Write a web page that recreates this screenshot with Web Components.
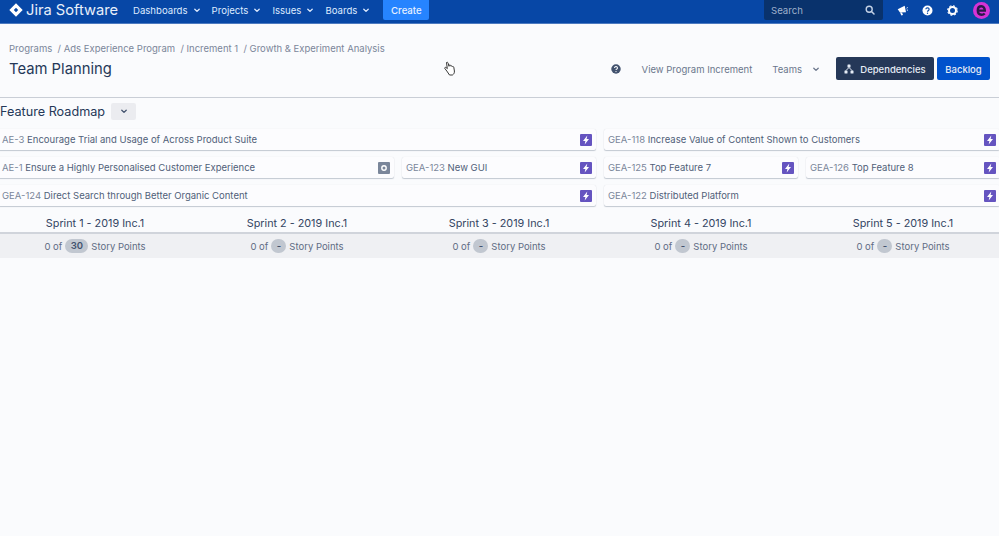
<!DOCTYPE html>
<html>
<head>
<meta charset="utf-8">
<title>Team Planning</title>
<style>
    html, body { margin: 0; height: 100%; overflow: hidden; }
    body {
        background: #fafbfd;
        color: #253858;
        font-family: Inter, "Liberation Sans", sans-serif;
    }
</style>
</head>
<body>
<top-nav></top-nav>
<page-header></page-header>
<feature-roadmap></feature-roadmap>
<sprint-board></sprint-board>
<hand-cursor></hand-cursor>

<script>
const chevron = `<svg width="6" height="5" viewBox="0 0 6 5"><path d="M.8 1.200 3 3.400 5.200 1.200" fill="none" stroke="currentColor" stroke-width="1.300" stroke-linecap="round" stroke-linejoin="round"/></svg>`;

class NavItem extends HTMLElement {
    constructor() {
        super();
        this.attachShadow({ mode: "open" });
        this.shadowRoot.innerHTML = `
            <style>
                :host {
                    display: flex;
                    align-items: center;
                    gap: 6px;
                    color: #deebff;
                    font-size: 9.600px;
                    white-space: nowrap;
                }
            </style>
            <slot></slot>${chevron}
        `;
    }
}

class TopNav extends HTMLElement {
    constructor() {
        super();
        this.attachShadow({ mode: "open" });
        this.shadowRoot.innerHTML = `
            <style>
                :host {
                    display: flex;
                    align-items: flex-start;
                    height: 24px;
                    box-sizing: border-box;
                    background: #0747a6;
                    border-bottom: 1px solid #4c7ac0;
                    color: #fff;
                }
                .row { display: flex; align-items: center; height: 20px; }
                .logo { margin-left: 9px; gap: 3px; width: 124px; }
                .logo span { font-size: 14.700px; white-space: nowrap; color: #e8effa; }
                .items { gap: 12px; }
                .create {
                    margin-left: 14px;
                    background: #2684ff;
                    color: #e8f1ff;
                    font-size: 9.600px;
                    font-weight: 500;
                    width: 46px;
                    border-radius: 0 0 2px 2px;
                    justify-content: center;
                }
                .search {
                    margin-left: auto;
                    width: 119px;
                    box-sizing: border-box;
                    padding: 0 8px 0 7px;
                    background: #09326c;
                    border-radius: 0 0 2px 2px;
                    color: #9fb0cb;
                    font-size: 9.600px;
                    justify-content: space-between;
                }
                .icons { gap: 14px; margin: 0 9px 0 14px; }
                .avatar { margin-left: 1px; }
                svg { display: block; }
            </style>
            <div class="row logo">
                <svg width="14" height="14" viewBox="0 0 14 14"><path d="M7 .3 13.700 7 7 13.700 .3 7zM7 4.800 4.800 7 7 9.200 9.200 7z" fill="#fff" fill-rule="evenodd"/></svg>
                <span>Jira Software</span>
            </div>
            <div class="row items">
                <nav-item>Dashboards</nav-item>
                <nav-item>Projects</nav-item>
                <nav-item>Issues</nav-item>
                <nav-item>Boards</nav-item>
            </div>
            <div class="row create">Create</div>
            <div class="row search">
                <span>Search</span>
                <svg width="10" height="10" viewBox="0 0 10 10"><circle cx="4.200" cy="4.200" r="3" fill="none" stroke="#c5d2e6" stroke-width="1.400"/><path d="M6.500 6.500 9 9" stroke="#c5d2e6" stroke-width="1.500" stroke-linecap="round"/></svg>
            </div>
            <div class="row icons">
                <svg width="11" height="11" viewBox="0 0 11 11"><path d="M.7 4.300 7.700.8l1.300 6.500-6 .2z" fill="#fff"/><path d="M3 7.500 4.400 10.500 6 10 5 7.400" fill="#fff"/><path d="M9.500 3.200 10.800 2.500M9.800 5 11 5.200" stroke="#fff" stroke-width=".9"/></svg>
                <svg width="11" height="11" viewBox="0 0 11 11"><circle cx="5.500" cy="5.500" r="5" fill="#fff"/><path d="M3.900 4.300a1.600 1.500 0 1 1 2.400 1.300c-.6.300-.8.600-.8 1.100" fill="none" stroke="#0747a6" stroke-width="1.200"/><circle cx="5.500" cy="8.300" r=".7" fill="#0747a6"/></svg>
                <svg width="11" height="11" viewBox="0 0 11 11"><circle cx="5.500" cy="5.500" r="3.500" fill="none" stroke="#fff" stroke-width="2"/><circle cx="5.500" cy="5.500" r="4.800" fill="none" stroke="#fff" stroke-width="1.100" stroke-dasharray="2 1.770"/></svg>
                <svg class="avatar" width="17" height="17" viewBox="0 0 17 17"><circle cx="8.500" cy="8.500" r="8.500" fill="#d633d6"/><path d="M4.800 8.600h7C11.800 5.900 10.400 4.300 8.400 4.300 6.200 4.300 4.800 6.100 4.800 8.500c0 2.500 1.500 4.200 3.800 4.200 1.300 0 2.300-.4 3.100-1.200" fill="none" stroke="#2a1a4a" stroke-width="2.400"/></svg>
            </div>
        `;
    }
}

class PageHeader extends HTMLElement {
    constructor() {
        super();
        this.attachShadow({ mode: "open" });
        this.shadowRoot.innerHTML = `
            <style>
                :host {
                    display: flex;
                    justify-content: space-between;
                    height: 74px;
                    box-sizing: border-box;
                    padding: 0 9px;
                    border-bottom: 1px solid #c9ced6;
                }
                .crumbs {
                    margin-top: 19px;
                    font-size: 9.500px;
                    line-height: 12px;
                    color: #7a869a;
                    white-space: pre;
                }
                h1 {
                    margin: 5px 0 0;
                    font-size: 14.800px;
                    line-height: 19px;
                    font-weight: 400;
                    color: #253858;
                }
                .actions { display: flex; align-items: center; height: 23px; margin-top: 33px; color: #6b778c; font-size: 9.500px; white-space: nowrap; }
                .help { margin-right: 21px; display: block; }
                .view { padding-top: 1px; }
                .teams { margin-left: 20px; padding-top: 1px; display: flex; align-items: center; gap: 11px; margin-right: 17px; }
                .btn {
                    height: 23px;
                    box-sizing: border-box;
                    padding-top: 1px;
                    border-radius: 2px;
                    display: flex;
                    align-items: center;
                    justify-content: center;
                    color: #e6ecf5;
                    font-weight: 500;
                }
                .dep { width: 98px; background: #253858; gap: 6px; }
                .back { width: 53px; background: #0052cc; margin-left: 3px; }
            </style>
            <div>
                <div class="crumbs">Programs  / Ads Experience Program  / Increment 1  / Growth &amp; Experiment Analysis</div>
                <h1>Team Planning</h1>
            </div>
            <div class="actions">
                <svg class="help" width="10" height="10" viewBox="0 0 11 11"><circle cx="5.500" cy="5.500" r="5.200" fill="#42526e"/><path d="M3.900 4.300a1.600 1.500 0 1 1 2.400 1.300c-.6.300-.8.600-.8 1.100" fill="none" stroke="#fafbfd" stroke-width="1.200"/><circle cx="5.500" cy="8.300" r=".7" fill="#fafbfd"/></svg>
                <span class="view">View Program Increment</span>
                <span class="teams">Teams ${chevron}</span>
                <div class="btn dep">
                    <svg width="10" height="10" viewBox="0 0 10 10" fill="#e6ecf5"><rect x="3.500" y=".5" width="3" height="3" rx=".6"/><rect x=".5" y="6.500" width="3" height="3" rx=".6"/><rect x="6.500" y="6.500" width="3" height="3" rx=".6"/><path d="M5 3.500 2 6.500M5 3.500 8 6.500" stroke="#e6ecf5"/></svg>
                    Dependencies
                </div>
                <div class="btn back">Backlog</div>
            </div>
        `;
    }
}

class FeatureCard extends HTMLElement {
    constructor() {
        super();
        this.attachShadow({ mode: "open" });
    }

    connectedCallback() {
        const isCapability = this.getAttribute("kind") === "other";
        const icon = isCapability
            ? `<svg width="12" height="12" viewBox="0 0 12 12"><rect width="12" height="12" rx="1" fill="#7a869a"/><circle cx="6" cy="6" r="2.200" fill="none" stroke="#fff" stroke-width="1.400"/></svg>`
            : `<svg width="12" height="12" viewBox="0 0 12 12"><rect width="12" height="12" rx="1" fill="#6554c0"/><path d="M7.300 1.500 3 6.900h2.400L4.700 10.500 9 5.100H6.600z" fill="#fff"/></svg>`;
        this.shadowRoot.innerHTML = `
            <style>
                :host {
                    display: flex;
                    align-items: center;
                    justify-content: space-between;
                    height: 21px;
                    box-sizing: border-box;
                    padding: 0 4px;
                    background: #fcfcfe;
                    border-radius: 2px;
                    box-shadow: 0 1px 1px rgba(9, 30, 66, 0.22), 0 0 1px rgba(9, 30, 66, 0.12);
                    font-size: 9.500px;
                    color: #505f79;
                    white-space: nowrap;
                }
                .key { color: #7a869a; }
                svg { display: block; flex: none; }
            </style>
            <span><span class="key">${this.getAttribute("key-id")}</span> <slot></slot></span>
            ${icon}
        `;
    }
}

class FeatureRoadmap extends HTMLElement {
    constructor() {
        super();
        this.attachShadow({ mode: "open" });
        this.shadowRoot.innerHTML = `
            <style>
                :host { display: block; }
                .title { display: flex; align-items: center; height: 18px; margin-top: 4px; gap: 6px; }
                h2 { margin: 0; font-size: 12.650px; font-weight: 400; color: #253858; }
                .toggle {
                    width: 25px;
                    height: 17px;
                    border-radius: 2px;
                    background: #ebecf0;
                    color: #42526e;
                    display: flex;
                    align-items: center;
                    justify-content: center;
                }
                .grid {
                    display: grid;
                    grid-template-columns: repeat(5, 194px);
                    grid-auto-rows: 21px;
                    gap: 7px 8px;
                    margin: 9px 0 0 -2px;
                }
                .w3 { grid-column: span 3; }
                .w2 { grid-column: span 2; }
            </style>
            <div class="title"><h2>Feature Roadmap</h2><div class="toggle">${chevron}</div></div>
            <div class="grid">
                <feature-card class="w3" key-id="AE-3">Encourage Trial and Usage of Across Product Suite</feature-card>
                <feature-card class="w2" key-id="GEA-118">Increase Value of Content Shown to Customers</feature-card>
                <feature-card class="w2" key-id="AE-1" kind="other">Ensure a Highly Personalised Customer Experience</feature-card>
                <feature-card key-id="GEA-123">New GUI</feature-card>
                <feature-card key-id="GEA-125">Top Feature 7</feature-card>
                <feature-card key-id="GEA-126">Top Feature 8</feature-card>
                <feature-card class="w3" key-id="GEA-124">Direct Search through Better Organic Content</feature-card>
                <feature-card class="w2" key-id="GEA-122">Distributed Platform</feature-card>
            </div>
        `;
    }
}

class SprintColumn extends HTMLElement {
    constructor() {
        super();
        this.attachShadow({ mode: "open" });
    }

    connectedCallback() {
        const points = this.getAttribute("points") || "-";
        const wide = points.length > 1;
        this.shadowRoot.innerHTML = `
            <style>
                :host {
                    display: block;
                    text-align: center;
                    white-space: nowrap;
                }
                .name { height: 23px; line-height: 25px; font-size: 10.800px; color: #344563; }
                .points {
                    height: 24px;
                    display: flex;
                    align-items: center;
                    justify-content: center;
                    gap: 3px;
                    font-size: 9.500px;
                    color: #5e6c84;
                }
                .pill {
                    min-width: ${wide ? 23 : 15}px;
                    height: 14px;
                    line-height: 14px;
                    border-radius: 7px;
                    background: #c1c7d0;
                    color: #42526e;
                    font-weight: 600;
                }
            </style>
            <div class="name"><slot></slot></div>
            <div class="points">0 of <span class="pill">${points}</span> Story Points</div>
        `;
    }
}

class SprintBoard extends HTMLElement {
    constructor() {
        super();
        this.attachShadow({ mode: "open" });
        this.shadowRoot.innerHTML = `
            <style>
                :host {
                    display: grid;
                    grid-template-columns: repeat(5, 194px);
                    column-gap: 8px;
                    margin: 5px 0 0 -2px;
                    background: linear-gradient(#fafbfd 21px, #d0d4db 21px, #d0d4db 23px, #eff0f3 23px);
                    height: 47px;
                    width: 1003px;
                }
            </style>
            <sprint-column points="30">Sprint 1 - 2019 Inc.1</sprint-column>
            <sprint-column>Sprint 2 - 2019 Inc.1</sprint-column>
            <sprint-column>Sprint 3 - 2019 Inc.1</sprint-column>
            <sprint-column>Sprint 4 - 2019 Inc.1</sprint-column>
            <sprint-column>Sprint 5 - 2019 Inc.1</sprint-column>
        `;
    }
}

// the mouse pointer caught in the capture
class HandCursor extends HTMLElement {
    constructor() {
        super();
        this.attachShadow({ mode: "open" });
        this.shadowRoot.innerHTML = `
            <style>
                :host { position: absolute; left: 444px; top: 60px; display: block; width: 12px; height: 15px; }
            </style>
            <svg width="12" height="15" viewBox="0 0 12 15"><path d="M2.500 1.500c.8-.6 1.500 0 1.700.8l.8 3 .2-1c.6-.6 1.300-.4 1.500.3l.2.6c.5-.5 1.300-.3 1.500.4.600-.3 1.300 0 1.400.7l.6 3.700c.2 1.800-.6 3.200-2 4H5.500L2.800 10 .8 7.500c-.3-1 .6-1.500 1.400-.9l1.100 1.100z" fill="#fff" stroke="#222" stroke-width=".9" stroke-linejoin="round"/></svg>
        `;
    }
}

customElements.define("nav-item", NavItem);
customElements.define("top-nav", TopNav);
customElements.define("page-header", PageHeader);
customElements.define("feature-card", FeatureCard);
customElements.define("feature-roadmap", FeatureRoadmap);
customElements.define("sprint-column", SprintColumn);
customElements.define("sprint-board", SprintBoard);
customElements.define("hand-cursor", HandCursor);
</script>
</body>
</html>
